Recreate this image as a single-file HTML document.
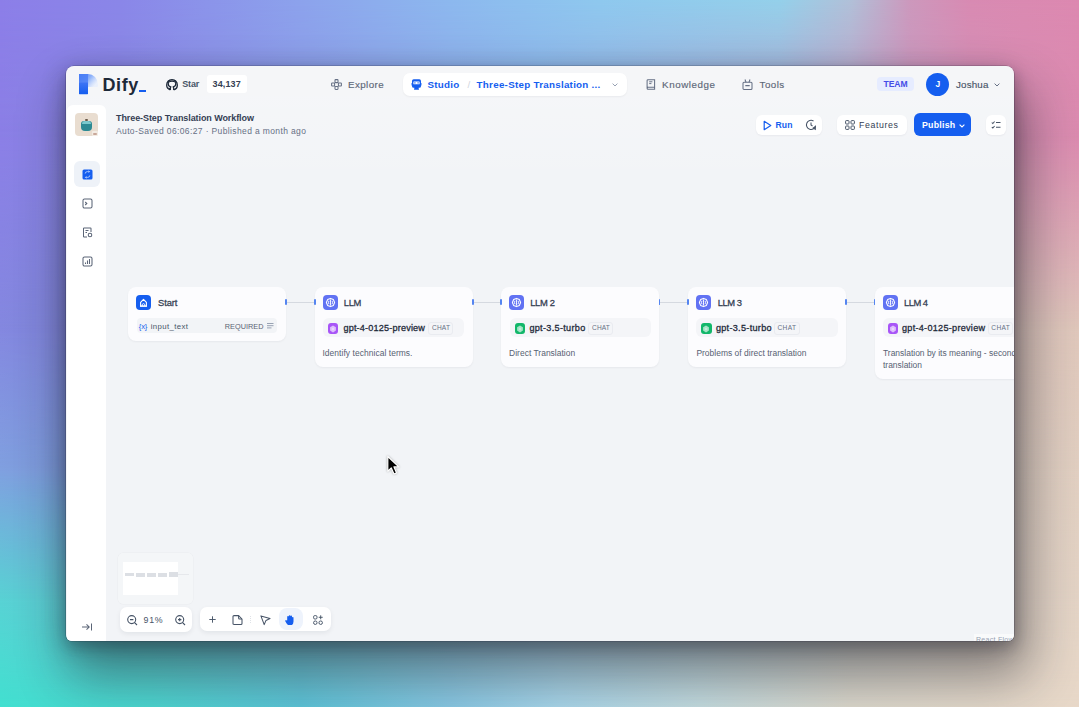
<!DOCTYPE html>
<html><head><meta charset="utf-8">
<style>
*{margin:0;padding:0;box-sizing:border-box}
html,body{width:1079px;height:707px;overflow:hidden}
body{position:relative;font-family:"Liberation Sans",sans-serif;background:#8fa0e0}
.bg{position:absolute;left:0;top:0;width:1079px;height:707px;overflow:hidden}
.bg div{position:absolute;left:0;top:0;width:1079px;height:707px}
.abs{position:absolute}
.win{position:absolute;left:66px;top:66px;width:948px;height:574.5px;background:#f2f4f7;border-radius:8px 8px 6px 6px;overflow:hidden}
.shadow{position:absolute;left:66px;top:66px;width:948px;height:574.5px;border-radius:8px 8px 6px 6px;box-shadow:0 0 0 .6px rgba(30,30,50,.35),-2px 5px 22px rgba(20,20,40,.28),2px 6px 12px rgba(20,20,30,.15),8px 30px 50px 6px rgba(25,25,35,.44)}
.t{position:absolute;white-space:nowrap;line-height:1}
</style></head><body>
<div class="bg"><div style="background:linear-gradient(90deg,#42e0d0 0px,#4cd6d0 150px,#5cc4d8 300px,#88c8e4 450px,#a8d6ea 560px,#c4dce0 700px,#dcd8cc 850px,#e8d8c8 1079px)"></div><div style="background:linear-gradient(90deg,#58d2d4 0px,#5cc8d0 66px,#a8d0e0 540px,#e0d2c6 1013px,#e4d4c6 1079px);-webkit-mask-image:linear-gradient(180deg,#000 600px,transparent 707px);mask-image:linear-gradient(180deg,#000 600px,transparent 707px)"></div><div style="background:linear-gradient(90deg,#80a0e0 0px,#7a98d8 66px,#a0c0e0 540px,#dcccc0 1013px,#e2d0c2 1079px);-webkit-mask-image:linear-gradient(180deg,#000 470px,transparent 600px);mask-image:linear-gradient(180deg,#000 470px,transparent 600px)"></div><div style="background:linear-gradient(90deg,#8488e0 0px,#7e84d8 66px,#98b8e0 540px,#dcc4bc 1013px,#e0c8bc 1079px);-webkit-mask-image:linear-gradient(180deg,#000 330px,transparent 470px);mask-image:linear-gradient(180deg,#000 330px,transparent 470px)"></div><div style="background:linear-gradient(90deg,#8b7fe6 0px,#8882e2 66px,#90b0e8 540px,#d890b4 1013px,#dc8cb0 1079px);-webkit-mask-image:linear-gradient(180deg,#000 140px,transparent 330px);mask-image:linear-gradient(180deg,#000 140px,transparent 330px)"></div><div style="background:linear-gradient(90deg,#8c7ee8 0px,#8a86e8 120px,#8ca2ec 300px,#8cb8ee 450px,#8ec8ee 600px,#94d0ea 780px,#b0c0d8 850px,#cc98bc 910px,#d88ab2 970px,#dc88b0 1079px);-webkit-mask-image:linear-gradient(180deg,#000 0px,transparent 140px);mask-image:linear-gradient(180deg,#000 0px,transparent 140px)"></div></div>
<div class="shadow"></div>
<div class="win">
<div class="abs" style="left:0.00px;top:0.00px;width:948.00px;height:30.00px;background:rgba(255,255,255,.22)"></div>
<div class="abs" style="left:0.00px;top:30.00px;width:948.00px;height:89.00px;background:linear-gradient(180deg,rgba(255,255,255,.22),rgba(255,255,255,0))"></div>
<svg class="abs" style="left:13.00px;top:8.00px" width="20" height="21" viewBox="0 0 20 21" ><defs><linearGradient id="lg1" x1="0" y1="0" x2="1" y2=".6"><stop offset="0" stop-color="#3d74f6"/><stop offset=".55" stop-color="#8fb3fa"/><stop offset="1" stop-color="#e3ecfe" stop-opacity=".6"/></linearGradient><linearGradient id="lg2" x1="0" y1="0" x2="0" y2="1"><stop offset="0" stop-color="#3f75f5"/><stop offset="1" stop-color="#155eef"/></linearGradient></defs><path d="M0 0 H9 A10 10.5 0 0 1 19 10.5 Q19 12 18.5 13 H9 V10.5 H0 Z" fill="url(#lg1)"/><rect x="0" y="8" width="9" height="12.2" rx=".6" fill="url(#lg2)"/><rect x="0" y="0" width="9" height="9" fill="#4b7ff6" opacity=".85"/></svg>
<div class="t" style="left:36.48px;top:9.56px;font-size:18px;font-weight:bold;letter-spacing:0.637px;color:#1d2939;">Dify</div>
<div class="abs" style="left:73.40px;top:24.00px;width:6.20px;height:2.40px;background:#155eef"></div>
<svg class="abs" style="left:100.40px;top:12.50px" width="12" height="12" viewBox="0 0 12 12" ><path d="M4.3 10.9 V9.2 Q4.3 8.3 4.9 7.8 Q2.2 7.4 2.2 5.1 Q2.2 4.1 2.8 3.4 Q2.6 2.6 2.9 1.8 Q3.8 1.8 4.6 2.4 Q6 2 7.4 2.4 Q8.2 1.8 9.1 1.8 Q9.4 2.6 9.2 3.4 Q9.8 4.1 9.8 5.1 Q9.8 7.4 7.1 7.8 Q7.7 8.3 7.7 9.2 V10.9" fill="none" stroke="#1d2939" stroke-width="1.3" stroke-linejoin="round"/><path d="M4.3 10.9 Q.5 9.6 .7 6 Q.9 1.3 6 .7 Q11.1 1.3 11.3 6 Q11.5 9.6 7.7 10.9" fill="none" stroke="#1d2939" stroke-width="1.3"/><path d="M4.3 9.6 Q2.8 9.8 2.3 8.6" fill="none" stroke="#1d2939" stroke-width=".9"/></svg>
<div class="t" style="left:116.24px;top:14.18px;font-size:9px;font-weight:bold;letter-spacing:-0.157px;color:#475467;">Star</div>
<div class="abs" style="left:140.50px;top:9.30px;width:40.30px;height:18.00px;background:#fff;border-radius:3px"></div>
<div class="t" style="left:146.62px;top:14.18px;font-size:9px;font-weight:bold;letter-spacing:0.112px;color:#344054;">34,137</div>
<svg class="abs" style="left:265.00px;top:12.50px" width="11" height="11" viewBox="0 0 11 11" fill="none" stroke="#667085" stroke-width="1.05"><path d="M4 1.2 Q4 .6 4.6 .6 H6.4 Q7 .6 7 1.2 V3 Q7 3.6 6.4 3.6 H4.6 Q4 3.6 4 3 Z M4 8 Q4 7.4 4.6 7.4 H6.4 Q7 7.4 7 8 V9.8 Q7 10.4 6.4 10.4 H4.6 Q4 10.4 4 9.8 Z M.6 4.6 Q.6 4 1.2 4 H3 Q3.6 4 3.6 4.6 V6.4 Q3.6 7 3 7 H1.2 Q.6 7 .6 6.4 Z M7.4 4.6 Q7.4 4 8 4 H9.8 Q10.4 4 10.4 4.6 V6.4 Q10.4 7 9.8 7 H8 Q7.4 7 7.4 6.4 Z"/></svg>
<div class="t" style="left:281.96px;top:13.55px;font-size:9.8px;-webkit-text-stroke:.14px currentColor;letter-spacing:0.415px;color:#5c6677;">Explore</div>
<div class="abs" style="left:336.80px;top:7.30px;width:224.00px;height:22.70px;background:#fff;border-radius:7px;box-shadow:0 1px 2px rgba(16,24,40,.05)"></div>
<svg class="abs" style="left:344.50px;top:12.50px" width="11" height="11" viewBox="0 0 11 11" ><path fill="#155eef" d="M1 2 Q1 .3 2.7 .3 H8.3 Q10 .3 10 2 V7.2 Q10 8.8 8.3 8.8 H7.6 L8 10.7 H3 L3.4 8.8 H2.7 Q1 8.8 1 7.2 Z"/><rect x="2.4" y="2.6" width="6.2" height="2.6" rx=".5" fill="#fff"/><rect x="3.3" y="3.3" width="1.2" height="1.2" fill="#155eef"/><rect x="6.5" y="3.3" width="1.2" height="1.2" fill="#155eef"/><path d="M0 4 V6.5 M11 4 V6.5" stroke="#155eef" stroke-width=".9"/></svg>
<div class="t" style="left:361.58px;top:13.55px;font-size:9.8px;font-weight:bold;letter-spacing:0.224px;color:#155eef;">Studio</div>
<div class="t" style="left:401.50px;top:13.55px;font-size:9.8px;letter-spacing:0.000px;color:#d0d5dd;">/</div>
<div class="t" style="left:410.62px;top:13.55px;font-size:9.8px;font-weight:bold;letter-spacing:0.266px;color:#155eef;">Three-Step Translation ...</div>
<svg class="abs" style="left:545.50px;top:16.50px" width="6" height="4" viewBox="0 0 6 4" ><path d="M.6 .6 L3 3 L5.4 .6" fill="none" stroke="#98a2b3" stroke-width="1"/></svg>
<svg class="abs" style="left:579.50px;top:12.80px" width="10" height="11" viewBox="0 0 10 11" ><path d="M1.1 9.2 V1.6 Q1.1 .7 2 .7 H8.6 V8.3 H2 Q1.1 8.3 1.1 9.2 Q1.1 10.2 2 10.2 H8.6 V8.3" fill="none" stroke="#667085" stroke-width="1.05"/><path d="M3.2 2.8 H6.4 M3.2 4.6 H5.4" stroke="#667085" stroke-width="1"/></svg>
<div class="t" style="left:596.10px;top:13.55px;font-size:9.8px;-webkit-text-stroke:.14px currentColor;letter-spacing:0.550px;color:#5c6677;">Knowledge</div>
<svg class="abs" style="left:675.50px;top:12.50px" width="11" height="11" viewBox="0 0 11 11" ><rect x="1" y="3.2" width="9" height="7.2" rx="1" fill="none" stroke="#667085" stroke-width="1.05"/><path d="M3 .5 L4 3.2 M8 .5 L7 3.2 M3.3 6.6 H7.7" stroke="#667085" stroke-width="1.05" fill="none"/></svg>
<div class="t" style="left:693.62px;top:13.55px;font-size:9.8px;-webkit-text-stroke:.14px currentColor;letter-spacing:0.420px;color:#5c6677;">Tools</div>
<div class="abs" style="left:811.30px;top:11.30px;width:37.00px;height:14.20px;background:#e6ecff;border-radius:4px"></div>
<div class="t" style="left:817.52px;top:14.42px;font-size:8.6px;font-weight:bold;letter-spacing:-0.078px;color:#444ce7;">TEAM</div>
<div class="abs" style="left:860.00px;top:6.60px;width:23.00px;height:23.00px;background:#155eef;border-radius:50%"></div>
<div class="t" style="left:869.52px;top:14.30px;font-size:8.5px;font-weight:bold;letter-spacing:0.000px;color:#fff;">J</div>
<div class="t" style="left:890.00px;top:13.55px;font-size:9.8px;-webkit-text-stroke:.14px currentColor;letter-spacing:0.160px;color:#475467;">Joshua</div>
<svg class="abs" style="left:927.80px;top:16.50px" width="6" height="4" viewBox="0 0 6 4" ><path d="M.6 .6 L3 3 L5.4 .6" fill="none" stroke="#667085" stroke-width="1"/></svg>
<div class="abs" style="left:1.00px;top:38.80px;width:39.20px;height:545.20px;background:#fff;border-radius:6px 6px 0 0"></div>
<div class="abs" style="left:9.10px;top:47.30px;width:23.00px;height:23.00px;background:#e9ddd0;border-radius:4px"></div>
<div class="abs" style="left:15.20px;top:54.50px;width:10.80px;height:10.30px;background:#2d8a93;border-radius:3px 3px 4px 4px"></div>
<div class="abs" style="left:16.00px;top:54.50px;width:9.00px;height:3.00px;background:#8fd8dc;border-radius:3px 3px 0 0;opacity:.8"></div>
<div class="abs" style="left:19.00px;top:52.60px;width:3.00px;height:2.00px;background:#6a5a4a;border-radius:1px"></div>
<div class="abs" style="left:25.70px;top:64.70px;width:6.30px;height:5.60px;background:#f3ece4;border-radius:1px"></div>
<div class="abs" style="left:27.00px;top:66.50px;width:3.50px;height:2.50px;background:#c9a89a;border-radius:1px"></div>
<div class="abs" style="left:7.50px;top:95.00px;width:26.50px;height:25.50px;background:#eef2f8;border-radius:6px"></div>
<svg class="abs" style="left:15.50px;top:102.50px" width="11" height="11" viewBox="0 0 11 11" ><rect x=".5" y=".5" width="10" height="10" rx="1.5" fill="#155eef"/><path d="M3.2 4.6 Q3.2 2.6 5.5 2.6 H7.6 M6.6 1.6 L7.6 2.6 L6.6 3.6 M7.8 6.4 Q7.8 8.4 5.5 8.4 H3.4 M4.4 7.4 L3.4 8.4 L4.4 9.4" stroke="#b3cdff" stroke-width=".9" fill="none"/></svg>
<svg class="abs" style="left:15.50px;top:131.50px" width="11" height="11" viewBox="0 0 11 11" fill="none" stroke="#5b6577" stroke-width="1.05"><rect x="1" y="1" width="9" height="9" rx="1.5"/><path d="M3.2 4 L4.8 5.5 L3.2 7"/></svg>
<svg class="abs" style="left:15.50px;top:160.50px" width="11" height="11" viewBox="0 0 11 11" fill="none" stroke="#5b6577" stroke-width="1.05"><path d="M9 5 V1.6 Q9 1 8.4 1 H2.1 Q1.5 1 1.5 1.6 V9.4 Q1.5 10 2.1 10 H5"/><path d="M3.5 3.5 H6.5 M3.5 5.5 H5"/><circle cx="8" cy="8" r="1.8"/></svg>
<svg class="abs" style="left:15.50px;top:189.50px" width="11" height="11" viewBox="0 0 11 11" fill="none" stroke="#5b6577" stroke-width="1.05"><rect x="1" y="1" width="9" height="9" rx="1.5"/><path d="M3.5 8 V6.5 M5.5 8 V4.5 M7.5 8 V3"/></svg>
<svg class="abs" style="left:15.00px;top:556.00px" width="12" height="10" viewBox="0 0 12 10" fill="none" stroke="#5b6577" stroke-width="1.05"><path d="M1 5 H8 M5.5 2.3 L8.2 5 L5.5 7.7 M10.5 1.5 V8.5"/></svg>
<div class="t" style="left:50.00px;top:48.18px;font-size:9px;font-weight:bold;letter-spacing:-0.080px;color:#344054;">Three-Step Translation Workflow</div>
<div class="t" style="left:50.00px;top:60.60px;font-size:8.5px;letter-spacing:0.370px;color:#667085;">Auto-Saved 06:06:27 · Published a month ago</div>
<div class="abs" style="left:689.60px;top:48.80px;width:66.40px;height:20.70px;background:#fff;border-radius:6px;box-shadow:0 1px 2px rgba(16,24,40,.05)"></div>
<svg class="abs" style="left:696.50px;top:53.80px" width="9" height="11" viewBox="0 0 9 11" ><path d="M1.2 1.3 L7.8 5.5 L1.2 9.7 Z" fill="none" stroke="#155eef" stroke-width="1.2" stroke-linejoin="round"/></svg>
<div class="t" style="left:709.48px;top:54.92px;font-size:8.6px;font-weight:bold;letter-spacing:0.200px;color:#155eef;">Run</div>
<svg class="abs" style="left:738.80px;top:53.30px" width="12" height="12" viewBox="0 0 12 12" fill="none" stroke="#475467" stroke-width="1.05"><path d="M10.6 6.6 A4.6 4.6 0 1 1 8.5 2"/><path d="M6 3.5 V6 L7.5 7"/><path d="M8.3 9 L10.3 10.2 L10.3 7.8 Z" fill="#475467"/></svg>
<div class="abs" style="left:770.80px;top:48.80px;width:70.00px;height:20.70px;background:#fff;border-radius:6px;box-shadow:0 1px 2px rgba(16,24,40,.05)"></div>
<svg class="abs" style="left:779.00px;top:54.20px" width="10" height="10" viewBox="0 0 10 10" fill="none" stroke="#475467" stroke-width="1"><rect x=".6" y=".6" width="3.4" height="3.4" rx=".7"/><rect x="6" y=".6" width="3.4" height="3.4" rx=".7"/><rect x=".6" y="6" width="3.4" height="3.4" rx=".7"/><rect x="6" y="6" width="3.4" height="3.4" rx=".7"/></svg>
<div class="t" style="left:793.10px;top:54.75px;font-size:8.8px;letter-spacing:0.596px;color:#344054;">Features</div>
<div class="abs" style="left:847.50px;top:47.30px;width:57.70px;height:22.90px;background:#155eef;border-radius:6px"></div>
<div class="t" style="left:855.96px;top:54.75px;font-size:8.8px;font-weight:bold;letter-spacing:0.237px;color:#fff;">Publish</div>
<svg class="abs" style="left:892.50px;top:57.80px" width="6" height="4" viewBox="0 0 6 4" ><path d="M.6 .6 L3 3 L5.4 .6" fill="none" stroke="#fff" stroke-width="1.1"/></svg>
<div class="abs" style="left:919.50px;top:48.80px;width:20.50px;height:20.70px;background:#fff;border-radius:6px;box-shadow:0 1px 2px rgba(16,24,40,.05)"></div>
<svg class="abs" style="left:924.80px;top:54.20px" width="10" height="10" viewBox="0 0 10 10" fill="none" stroke="#475467" stroke-width="1.05"><path d="M.8 2.5 L1.8 3.5 L3.6 1.5 M.8 7 L1.8 8 L3.6 6 M5 2.5 H9.5 M5 7.2 H9.5"/></svg>
<div class="abs" style="left:61.90px;top:220.50px;width:158.00px;height:54.50px;background:#fcfcfe;border-radius:8px;box-shadow:0 1px 2px rgba(16,24,40,.05)"></div>
<div class="abs" style="left:69.90px;top:229.00px;width:15px;height:15px;border-radius:4px;background:#155eef"><svg width="15" height="15" viewBox="0 0 15 15" style="position:absolute;left:0;top:0"><path d="M4.6 11 V7.4 L7.5 4.4 L10.4 7.4 V11 Z" fill="none" stroke="#fff" stroke-width="1.1" stroke-linejoin="round"/><path d="M6.3 11 V9.3 Q7.5 7.9 8.7 9.3 V11" fill="none" stroke="#fff" stroke-width=".9"/><path d="M4 11.2 H11" stroke="#fff" stroke-width="1.2"/></svg></div>
<div class="t" style="left:92.00px;top:231.94px;font-size:9.4px;-webkit-text-stroke:.28px currentColor;letter-spacing:-0.080px;color:#354052;">Start</div>
<div class="abs" style="left:248.75px;top:220.50px;width:158.00px;height:80.50px;background:#fcfcfe;border-radius:8px;box-shadow:0 1px 2px rgba(16,24,40,.05)"></div>
<div class="abs" style="left:256.75px;top:229.00px;width:15px;height:15px;border-radius:4px;background:#6172f3"><svg width="15" height="15" viewBox="0 0 15 15" style="position:absolute;left:0;top:0"><path d="M7.5 3.4 L10.4 4.6 L11.6 7.5 L10.4 10.4 L7.5 11.6 L4.6 10.4 L3.4 7.5 L4.6 4.6 Z" fill="none" stroke="#fff" stroke-width="1.1" stroke-linejoin="round"/><path d="M7.5 4.6 V10.6 M5.9 5.8 Q5.1 7.5 5.9 9.2 M9.1 5.8 Q9.9 7.5 9.1 9.2" fill="none" stroke="#fff" stroke-width=".9"/></svg></div>
<div class="t" style="left:277.86px;top:231.94px;font-size:9.4px;-webkit-text-stroke:.28px currentColor;letter-spacing:-0.400px;color:#354052;">LLM</div>
<div class="abs" style="left:435.30px;top:220.50px;width:158.00px;height:80.50px;background:#fcfcfe;border-radius:8px;box-shadow:0 1px 2px rgba(16,24,40,.05)"></div>
<div class="abs" style="left:443.30px;top:229.00px;width:15px;height:15px;border-radius:4px;background:#6172f3"><svg width="15" height="15" viewBox="0 0 15 15" style="position:absolute;left:0;top:0"><path d="M7.5 3.4 L10.4 4.6 L11.6 7.5 L10.4 10.4 L7.5 11.6 L4.6 10.4 L3.4 7.5 L4.6 4.6 Z" fill="none" stroke="#fff" stroke-width="1.1" stroke-linejoin="round"/><path d="M7.5 4.6 V10.6 M5.9 5.8 Q5.1 7.5 5.9 9.2 M9.1 5.8 Q9.9 7.5 9.1 9.2" fill="none" stroke="#fff" stroke-width=".9"/></svg></div>
<div class="t" style="left:464.24px;top:231.94px;font-size:9.4px;-webkit-text-stroke:.28px currentColor;letter-spacing:-0.360px;color:#354052;">LLM 2</div>
<div class="abs" style="left:621.95px;top:220.50px;width:158.00px;height:80.50px;background:#fcfcfe;border-radius:8px;box-shadow:0 1px 2px rgba(16,24,40,.05)"></div>
<div class="abs" style="left:629.95px;top:229.00px;width:15px;height:15px;border-radius:4px;background:#6172f3"><svg width="15" height="15" viewBox="0 0 15 15" style="position:absolute;left:0;top:0"><path d="M7.5 3.4 L10.4 4.6 L11.6 7.5 L10.4 10.4 L7.5 11.6 L4.6 10.4 L3.4 7.5 L4.6 4.6 Z" fill="none" stroke="#fff" stroke-width="1.1" stroke-linejoin="round"/><path d="M7.5 4.6 V10.6 M5.9 5.8 Q5.1 7.5 5.9 9.2 M9.1 5.8 Q9.9 7.5 9.1 9.2" fill="none" stroke="#fff" stroke-width=".9"/></svg></div>
<div class="t" style="left:651.76px;top:231.94px;font-size:9.4px;-webkit-text-stroke:.28px currentColor;letter-spacing:-0.440px;color:#354052;">LLM 3</div>
<div class="abs" style="left:808.70px;top:220.50px;width:158.00px;height:92.00px;background:#fcfcfe;border-radius:8px;box-shadow:0 1px 2px rgba(16,24,40,.05)"></div>
<div class="abs" style="left:816.70px;top:229.00px;width:15px;height:15px;border-radius:4px;background:#6172f3"><svg width="15" height="15" viewBox="0 0 15 15" style="position:absolute;left:0;top:0"><path d="M7.5 3.4 L10.4 4.6 L11.6 7.5 L10.4 10.4 L7.5 11.6 L4.6 10.4 L3.4 7.5 L4.6 4.6 Z" fill="none" stroke="#fff" stroke-width="1.1" stroke-linejoin="round"/><path d="M7.5 4.6 V10.6 M5.9 5.8 Q5.1 7.5 5.9 9.2 M9.1 5.8 Q9.9 7.5 9.1 9.2" fill="none" stroke="#fff" stroke-width=".9"/></svg></div>
<div class="t" style="left:838.00px;top:231.94px;font-size:9.4px;-webkit-text-stroke:.28px currentColor;letter-spacing:-0.500px;color:#354052;">LLM 4</div>
<div class="abs" style="left:70.50px;top:252.20px;width:140.90px;height:14.40px;background:#f2f4f7;border-radius:4px"></div>
<div class="t" style="left:72.86px;top:256.77px;font-size:7.6px;letter-spacing:-0.160px;color:#155eef;">{x}</div>
<div class="t" style="left:84.64px;top:257.10px;font-size:7.8px;letter-spacing:0.385px;color:#475467;">input_text</div>
<div class="t" style="left:158.76px;top:256.62px;font-size:7.3px;letter-spacing:0.038px;color:#5b6475;">REQUIRED</div>
<svg class="abs" style="left:201.00px;top:256.50px" width="7" height="6" viewBox="0 0 7 6" stroke="#98a2b3" stroke-width="1"><path d="M0 .5 H6.5 M0 2.7 H6.5 M0 4.9 H4.5"/></svg>
<div class="abs" style="left:257.05px;top:252.30px;width:141.30px;height:18.50px;background:#f4f5f8;border-radius:6px"></div>
<div class="abs" style="left:262.05px;top:257.00px;width:10.40px;height:11.00px;background:#a855f7;border-radius:3px"></div>
<svg class="abs" style="left:262.25px;top:257.50px" width="10" height="10" viewBox="0 0 10 10" ><path d="M5 1.6 L7.9 3.2 V6.6 L5 8.4 L2.1 6.6 V3.2 Z" fill="rgba(255,255,255,.62)"/><circle cx="5" cy="5" r="1.2" fill="rgba(255,255,255,.35)"/></svg>
<div class="t" style="left:277.42px;top:257.50px;font-size:9.1px;-webkit-text-stroke:.28px currentColor;letter-spacing:0.185px;color:#1d2939;">gpt-4-0125-preview</div>
<div class="abs" style="left:362.40px;top:256.30px;width:25.00px;height:12.50px;border:.7px solid #e9ebf0;border-radius:3px"></div>
<div class="t" style="left:366.00px;top:259.01px;font-size:6.6px;letter-spacing:0.163px;color:#667085;">CHAT</div>
<div class="t" style="left:256.48px;top:283.05px;font-size:8.45px;letter-spacing:0.057px;color:#576173;">Identify technical terms.</div>
<div class="abs" style="left:443.60px;top:252.30px;width:141.30px;height:18.50px;background:#f4f5f8;border-radius:6px"></div>
<div class="abs" style="left:448.60px;top:257.00px;width:10.40px;height:11.00px;background:#12b76a;border-radius:3px"></div>
<svg class="abs" style="left:448.80px;top:257.50px" width="10" height="10" viewBox="0 0 10 10" ><path d="M5 1.6 L7.9 3.2 V6.6 L5 8.4 L2.1 6.6 V3.2 Z" fill="rgba(255,255,255,.62)"/><circle cx="5" cy="5" r="1.2" fill="rgba(255,255,255,.35)"/></svg>
<div class="t" style="left:463.38px;top:257.50px;font-size:9.1px;-webkit-text-stroke:.28px currentColor;letter-spacing:0.315px;color:#1d2939;">gpt-3.5-turbo</div>
<div class="abs" style="left:522.40px;top:256.30px;width:24.70px;height:12.50px;border:.7px solid #e9ebf0;border-radius:3px"></div>
<div class="t" style="left:526.00px;top:259.01px;font-size:6.6px;letter-spacing:0.133px;color:#667085;">CHAT</div>
<div class="t" style="left:443.10px;top:283.05px;font-size:8.45px;letter-spacing:0.024px;color:#576173;">Direct Translation</div>
<div class="abs" style="left:630.25px;top:252.30px;width:141.30px;height:18.50px;background:#f4f5f8;border-radius:6px"></div>
<div class="abs" style="left:635.25px;top:257.00px;width:10.40px;height:11.00px;background:#12b76a;border-radius:3px"></div>
<svg class="abs" style="left:635.45px;top:257.50px" width="10" height="10" viewBox="0 0 10 10" ><path d="M5 1.6 L7.9 3.2 V6.6 L5 8.4 L2.1 6.6 V3.2 Z" fill="rgba(255,255,255,.62)"/><circle cx="5" cy="5" r="1.2" fill="rgba(255,255,255,.35)"/></svg>
<div class="t" style="left:649.90px;top:257.50px;font-size:9.1px;-webkit-text-stroke:.28px currentColor;letter-spacing:0.300px;color:#1d2939;">gpt-3.5-turbo</div>
<div class="abs" style="left:708.20px;top:256.30px;width:25.40px;height:12.50px;border:.7px solid #e9ebf0;border-radius:3px"></div>
<div class="t" style="left:711.48px;top:259.01px;font-size:6.6px;letter-spacing:0.370px;color:#667085;">CHAT</div>
<div class="t" style="left:630.38px;top:283.05px;font-size:8.45px;letter-spacing:0.026px;color:#576173;">Problems of direct translation</div>
<div class="abs" style="left:817.00px;top:252.30px;width:141.30px;height:18.50px;background:#f4f5f8;border-radius:6px"></div>
<div class="abs" style="left:822.00px;top:257.00px;width:10.40px;height:11.00px;background:#a855f7;border-radius:3px"></div>
<svg class="abs" style="left:822.20px;top:257.50px" width="10" height="10" viewBox="0 0 10 10" ><path d="M5 1.6 L7.9 3.2 V6.6 L5 8.4 L2.1 6.6 V3.2 Z" fill="rgba(255,255,255,.62)"/><circle cx="5" cy="5" r="1.2" fill="rgba(255,255,255,.35)"/></svg>
<div class="t" style="left:836.00px;top:257.50px;font-size:9.1px;-webkit-text-stroke:.28px currentColor;letter-spacing:0.276px;color:#1d2939;">gpt-4-0125-preview</div>
<div class="abs" style="left:922.30px;top:256.30px;width:24.80px;height:12.50px;border:.7px solid #e9ebf0;border-radius:3px"></div>
<div class="t" style="left:925.34px;top:259.01px;font-size:6.6px;letter-spacing:0.318px;color:#667085;">CHAT</div>
<div class="t" style="left:817.00px;top:283.05px;font-size:8.45px;letter-spacing:0.010px;color:#576173;">Translation by its meaning - second</div>
<div class="t" style="left:817.00px;top:295.25px;font-size:8.45px;letter-spacing:0.000px;color:#576173;">translation</div>
<div class="abs" style="left:219.90px;top:235.50px;width:28.85px;height:1.00px;background:#d5d9e0"></div>
<div class="abs" style="left:219.10px;top:233.30px;width:1.80px;height:5.90px;background:#5585f0;border-radius:1px"></div>
<div class="abs" style="left:247.75px;top:233.30px;width:1.80px;height:5.90px;background:#5585f0;border-radius:1px"></div>
<div class="abs" style="left:406.75px;top:235.50px;width:28.55px;height:1.00px;background:#d5d9e0"></div>
<div class="abs" style="left:405.95px;top:233.30px;width:1.80px;height:5.90px;background:#5585f0;border-radius:1px"></div>
<div class="abs" style="left:434.30px;top:233.30px;width:1.80px;height:5.90px;background:#5585f0;border-radius:1px"></div>
<div class="abs" style="left:593.30px;top:235.50px;width:28.65px;height:1.00px;background:#d5d9e0"></div>
<div class="abs" style="left:592.50px;top:233.30px;width:1.80px;height:5.90px;background:#5585f0;border-radius:1px"></div>
<div class="abs" style="left:620.95px;top:233.30px;width:1.80px;height:5.90px;background:#5585f0;border-radius:1px"></div>
<div class="abs" style="left:779.95px;top:235.50px;width:28.75px;height:1.00px;background:#d5d9e0"></div>
<div class="abs" style="left:779.15px;top:233.30px;width:1.80px;height:5.90px;background:#5585f0;border-radius:1px"></div>
<div class="abs" style="left:807.70px;top:233.30px;width:1.80px;height:5.90px;background:#5585f0;border-radius:1px"></div>
<div class="abs" style="left:52.00px;top:487.00px;width:75.30px;height:50.60px;background:rgba(255,255,255,.2);border-radius:5px;box-shadow:0 0 0 .5px rgba(16,24,40,.03)"></div>
<div class="abs" style="left:57.00px;top:496.00px;width:54.70px;height:32.50px;background:#fff"></div>
<div class="abs" style="left:59.00px;top:507.00px;width:9.00px;height:3.20px;background:#dcdfe4"></div>
<div class="abs" style="left:70.00px;top:506.60px;width:9.00px;height:4.00px;background:#dcdfe4"></div>
<div class="abs" style="left:81.00px;top:506.60px;width:9.00px;height:4.00px;background:#dcdfe4"></div>
<div class="abs" style="left:91.50px;top:506.60px;width:9.00px;height:4.00px;background:#dcdfe4"></div>
<div class="abs" style="left:102.50px;top:506.10px;width:9.00px;height:5.00px;background:#dcdfe4"></div>
<div class="abs" style="left:112.00px;top:507.80px;width:11.00px;height:1.40px;background:#e6e8ec"></div>
<div class="abs" style="left:53.60px;top:540.80px;width:72.90px;height:24.80px;background:#fff;border-radius:7px;box-shadow:0 2px 5px rgba(16,24,40,.07)"></div>
<svg class="abs" style="left:61.00px;top:548.80px" width="12" height="12" viewBox="0 0 12 12" fill="none" stroke="#475467" stroke-width="1.1"><circle cx="4.7" cy="4.6" r="4"/><path d="M3 4.6 H6.4 M7.6 7.6 L10 10"/></svg>
<div class="t" style="left:77.62px;top:549.75px;font-size:8.8px;letter-spacing:0.680px;color:#475467;">91%</div>
<svg class="abs" style="left:109.00px;top:548.80px" width="12" height="12" viewBox="0 0 12 12" fill="none" stroke="#475467" stroke-width="1.1"><circle cx="4.7" cy="4.6" r="4"/><path d="M3 4.6 H6.4 M4.7 2.9 V6.3 M7.6 7.6 L10 10"/></svg>
<div class="abs" style="left:133.80px;top:540.90px;width:131.20px;height:24.40px;background:#fff;border-radius:7px;box-shadow:0 2px 5px rgba(16,24,40,.07)"></div>
<svg class="abs" style="left:143.30px;top:550.20px" width="7" height="7" viewBox="0 0 7 7" stroke="#475467" stroke-width=".95"><path d="M3.5 .3 V6.7 M.3 3.5 H6.7"/></svg>
<svg class="abs" style="left:165.50px;top:549.00px" width="11" height="10" viewBox="0 0 11 10" fill="none" stroke="#475467" stroke-width="1.05" stroke-linejoin="round"><path d="M1 1.6 Q1 .6 2 .6 H6.6 L10 4 V8.4 Q10 9.4 9 9.4 H2 Q1 9.4 1 8.4 Z"/><path d="M6.6 .6 V3 Q6.6 4 7.6 4 H10"/></svg>
<div class="abs" style="left:184.20px;top:550.00px;width:0.70px;height:8.00px;background:repeating-linear-gradient(180deg,#dfe2e7 0 1px,transparent 1px 2px)"></div>
<svg class="abs" style="left:194.30px;top:548.80px" width="11" height="11" viewBox="0 0 11 11" fill="none" stroke="#475467" stroke-width="1.05" stroke-linejoin="round"><path d="M.9 .9 L10 3.6 L6 5.4 L4.2 9.6 Z"/></svg>
<div class="abs" style="left:212.50px;top:541.50px;width:24.70px;height:22.50px;background:#eef3fc;border-radius:8px"></div>
<svg class="abs" style="left:218.60px;top:548.50px" width="9" height="10.5" viewBox="0 0 9 10.5" ><path d="M2.2 5.2 V1.8 Q2.2 1 3 1 Q3.8 1 3.8 1.8 V4.2 V1 Q3.8 .2 4.6 .2 Q5.4 .2 5.4 1 V4.2 V1.4 Q5.4 .6 6.2 .6 Q7 .6 7 1.4 V4.4 V2.6 Q7 1.9 7.7 1.9 Q8.5 1.9 8.5 2.6 V6.6 Q8.5 10.3 5.2 10.3 H4.4 Q2.6 10.3 1.6 8.6 L.3 6.2 Q0 5.5 .6 5.2 Q1.2 4.9 1.7 5.5 Z" fill="#155eef"/></svg>
<svg class="abs" style="left:246.80px;top:549.00px" width="10" height="10" viewBox="0 0 10 10" fill="none" stroke="#475467" stroke-width=".95"><rect x=".6" y=".6" width="3.4" height="3.4" rx="1.2"/><circle cx="2.3" cy="7.7" r="1.75"/><circle cx="7.7" cy="7.7" r="1.75"/><path d="M7.7 .3 V4.3 M5.7 2.3 H9.7"/></svg>
<div class="abs" style="left:908.00px;top:568.00px;width:40.00px;height:7.00px;background:rgba(255,255,255,.5)"></div>
<div class="t" style="left:910.00px;top:569.57px;font-size:7px;letter-spacing:0.289px;color:#98a2b3;">React Flow</div>
</div>
<svg style="position:absolute;left:386px;top:454.7px;filter:drop-shadow(0 .5px 1px rgba(0,0,0,.3))" width="14" height="21" viewBox="0 0 14 21"><path d="M1.8 1.5 V16.2 L5.3 12.9 L8 19 L10.6 17.9 L8 11.9 H12.8 Z" fill="#000" stroke="#fff" stroke-width="1.2" stroke-linejoin="round"/></svg>
</body></html>
